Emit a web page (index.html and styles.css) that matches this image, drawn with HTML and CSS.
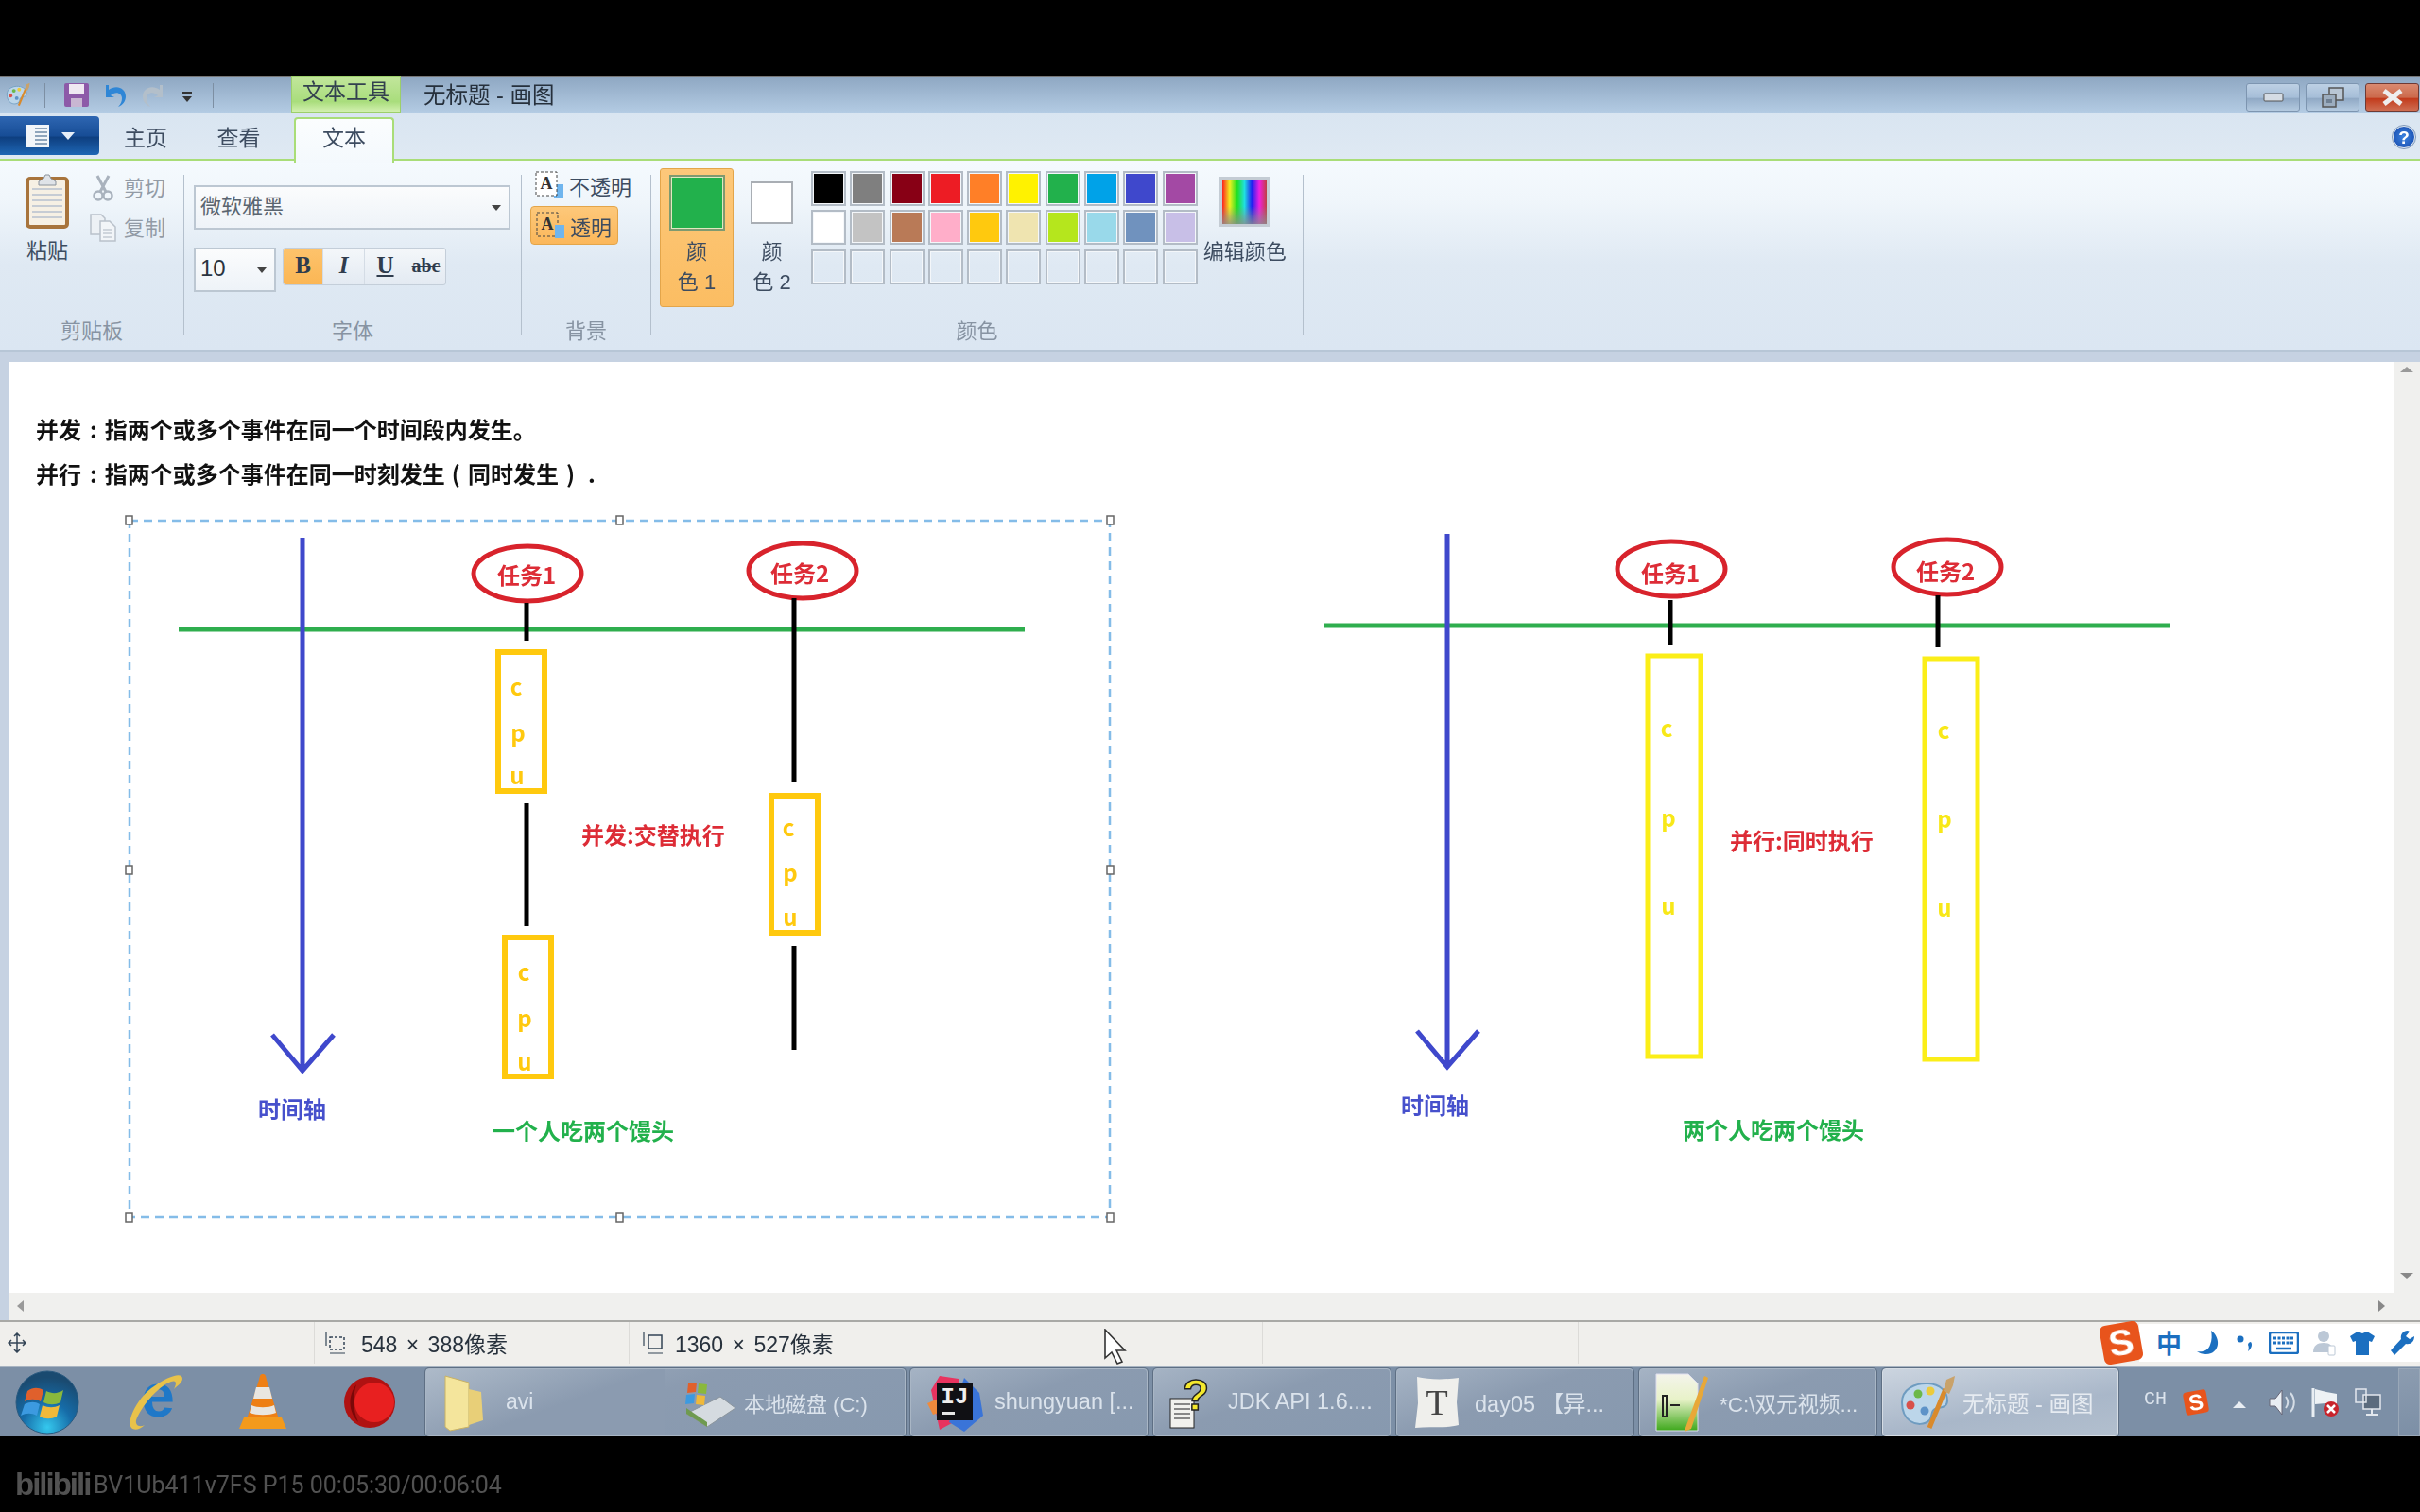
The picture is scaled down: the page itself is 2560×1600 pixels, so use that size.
FILE: index.html
```html
<!DOCTYPE html>
<html lang="zh-CN">
<head>
    <meta charset="UTF-8">
    <title>无标题 - 画图</title>
    <link rel="stylesheet" href="styles.css">
</head>
<body>
<svg class="defs" width="0" height="0">
    <symbol id="paint" viewBox="0 0 62 60">
        <path d="M4 30C4 16 18 9 32 10c12 1 20 8 20 18 0 8-8 7-13 9-5 2-2 7-6 12-5 5-14 5-20 1C7 46 4 38 4 30z" fill="#bcd6ea" stroke="#6f9cc0" stroke-width="2"/>
        <circle cx="13" cy="33" r="4.5" fill="#d8504a"/>
        <circle cx="21" cy="21" r="4.5" fill="#6cb84a"/>
        <circle cx="34" cy="18" r="4.5" fill="#eccb3c"/>
        <circle cx="28" cy="39" r="4.5" fill="#5e93c8"/>
        <path d="M33 57L50 16" stroke="#d98a2c" stroke-width="5" fill="none"/>
        <path d="M48 18l3-12 9-4-2 10-4 9z" fill="#c9a26a"/>
    </symbol>
</svg>

<div class="screen">
    <div class="video-bar"></div>

    <div class="window">
        <div class="titlebar">
            <svg class="qa-paint" width="28" height="26"><use href="#paint"/></svg>
            <div class="qa-sep"></div>
            <svg class="qa-save" width="28" height="27" viewBox="0 0 28 27">
                <rect x="1" y="1" width="26" height="25" rx="2" fill="#8d5aa8"/>
                <rect x="6" y="2" width="16" height="11" fill="#efe8f2"/>
                <rect x="8" y="17" width="12" height="9" fill="#c9b6d2"/>
            </svg>
            <svg class="qa-icon" width="26" height="28" viewBox="0 0 26 28">
                <path d="M3 4h3v5C14 3 24 7 24 16c0 5-3 9-8 11 3-3 4-6 4-9 0-6-7-8-12-3l4 2H3z" fill="#2f86d6"/>
            </svg>
            <svg class="qa-icon" width="26" height="28" viewBox="0 0 26 28">
                <path d="M23 4h-3v5C12 3 2 7 2 16c0 5 3 9 8 11-3-3-4-6-4-9 0-6 7-8 12-3l-4 2h9z" fill="#b3bfca"/>
            </svg>
            <svg class="qa-drop" width="12" height="14" viewBox="0 0 12 14">
                <rect x="1" y="1" width="10" height="2" fill="#333"/>
                <path d="M1 6h10l-5 6z" fill="#333"/>
            </svg>
            <div class="qa-sep qa-sep-last"></div>
            <div class="tool-tab">文本工具</div>
            <div class="doc-title">无标题 - 画图</div>
            <div class="win-buttons">
                <div class="win-btn">
                    <svg width="22" height="10"><rect x="1" y="1" width="20" height="8" rx="1" fill="#d5dce4" stroke="#555"/></svg>
                </div>
                <div class="win-btn">
                    <svg width="24" height="22" viewBox="0 0 24 22">
                        <rect x="8" y="1" width="15" height="13" fill="#b9c6d4" stroke="#555" stroke-width="1.5"/>
                        <rect x="1" y="8" width="14" height="13" fill="#9cadbf" stroke="#555" stroke-width="1.5"/>
                        <rect x="5" y="13" width="6" height="4" fill="#6f8093"/>
                    </svg>
                </div>
                <div class="win-btn win-close">
                    <svg width="22" height="18" viewBox="0 0 22 18"><path d="M2 2l18 14M20 2L2 16" stroke="#eee" stroke-width="5"/></svg>
                </div>
            </div>
        </div>

        <div class="tabs">
            <div class="app-menu">
                <svg width="30" height="26" viewBox="0 0 30 26">
                    <rect x="2" y="1" width="24" height="24" fill="#f2f5f9"/>
                    <path d="M11 5h13M11 9h13M11 13h13M11 17h13M11 21h13" stroke="#6f8aa8" stroke-width="1.5"/>
                </svg>
                <span class="app-arrow"></span>
            </div>
            <div class="tab tab-home">主页</div>
            <div class="tab tab-view">查看</div>
            <div class="tab tab-text">文本</div>
            <div class="help">?</div>
        </div>

        <div class="ribbon">
            <div class="group group-clip">
                <div class="group-body">
                    <div class="paste">
                        <svg width="46" height="58" viewBox="0 0 46 58">
                            <rect x="2" y="5" width="42" height="51" rx="3" fill="#f6f0e4" stroke="#a8743c" stroke-width="4"/>
                            <path d="M7 16h32M7 22h32M7 28h32M7 34h32M7 40h32M7 46h32" stroke="#c6ccd4" stroke-width="2"/>
                            <path d="M14 8l5-3 2-4h4l2 4 5 3v4H14z" fill="#dfe3e8" stroke="#8a929c"/>
                        </svg>
                        <div class="paste-label">粘贴</div>
                    </div>
                    <div class="clip-small">
                        <div class="clip-row">
                            <svg width="24" height="28" viewBox="0 0 24 28">
                                <path d="M6 1l9 17M18 1L9 18" stroke="#a9b2bd" stroke-width="3"/>
                                <circle cx="7" cy="22" r="4.5" fill="none" stroke="#a9b2bd" stroke-width="2.5"/>
                                <circle cx="17" cy="22" r="4.5" fill="none" stroke="#a9b2bd" stroke-width="2.5"/>
                            </svg>
                            <span class="clip-name">剪切</span>
                        </div>
                        <div class="clip-row">
                            <svg width="28" height="30" viewBox="0 0 28 30">
                                <path d="M1 1h11l4 4v17H1z" fill="#edf1f5" stroke="#b9c1ca" stroke-width="1.5"/>
                                <path d="M11 8h10l6 6v15H11z" fill="#f2f5f8" stroke="#b9c1ca" stroke-width="1.5"/>
                                <path d="M14 17h10M14 21h10M14 25h10" stroke="#c3cad2" stroke-width="1.5"/>
                            </svg>
                            <span class="clip-name">复制</span>
                        </div>
                    </div>
                </div>
                <div class="group-label">剪贴板</div>
            </div>
            <div class="group-sep"></div>

            <div class="group group-font">
                <div class="group-body font-body">
                    <div class="combo combo-font">
                        <span class="combo-text">微软雅黑</span>
                        <span class="combo-arrow"></span>
                    </div>
                    <div class="font-row">
                        <div class="combo combo-size">
                            <span class="combo-text combo-num">10</span>
                            <span class="combo-arrow"></span>
                        </div>
                        <div class="fmt-group">
                            <div class="fmt fmt-on fmt-b">B</div>
                            <div class="fmt fmt-i">I</div>
                            <div class="fmt fmt-u">U</div>
                            <div class="fmt fmt-s">abc</div>
                        </div>
                    </div>
                </div>
                <div class="group-label">字体</div>
            </div>
            <div class="group-sep"></div>

            <div class="group group-bg">
                <div class="group-body bg-body">
                    <div class="bg-row">
                        <svg width="30" height="30" viewBox="0 0 30 30">
                            <rect x="20" y="14" width="10" height="14" fill="#6fb5ee"/>
                            <rect x="1" y="1" width="22" height="25" fill="#fff" stroke="#444" stroke-dasharray="3 2"/>
                            <text class="icon-a" x="12" y="19" text-anchor="middle">A</text>
                        </svg>
                        <span>不透明</span>
                    </div>
                    <div class="bg-row bg-on">
                        <svg width="30" height="30" viewBox="0 0 30 30">
                            <rect x="1" y="1" width="22" height="25" fill="none" stroke="#444" stroke-dasharray="3 2"/>
                            <rect x="20" y="14" width="10" height="14" fill="#6fb5ee"/>
                            <text class="icon-a" x="12" y="19" text-anchor="middle">A</text>
                        </svg>
                        <span>透明</span>
                    </div>
                </div>
                <div class="group-label">背景</div>
            </div>
            <div class="group-sep"></div>

            <div class="group group-color">
                <div class="group-body color-body">
                    <div class="color-one">
                        <div class="swatch-big"></div>
                        <div class="color-name">颜<br>色 1</div>
                    </div>
                    <div class="color-two">
                        <div class="swatch-mid"></div>
                        <div class="color-name">颜<br>色 2</div>
                    </div>
                    <div class="palette">
                        <div class="cell c1"></div><div class="cell c2"></div><div class="cell c3"></div><div class="cell c4"></div><div class="cell c5"></div>
                        <div class="cell c6"></div><div class="cell c7"></div><div class="cell c8"></div><div class="cell c9"></div><div class="cell c10"></div>
                        <div class="cell c11"></div><div class="cell c12"></div><div class="cell c13"></div><div class="cell c14"></div><div class="cell c15"></div>
                        <div class="cell c16"></div><div class="cell c17"></div><div class="cell c18"></div><div class="cell c19"></div><div class="cell c20"></div>
                        <div class="cell"></div><div class="cell"></div><div class="cell"></div><div class="cell"></div><div class="cell"></div>
                        <div class="cell"></div><div class="cell"></div><div class="cell"></div><div class="cell"></div><div class="cell"></div>
                    </div>
                    <div class="edit-color">
                        <div class="rainbow"></div>
                        <div class="edit-label">编辑颜色</div>
                    </div>
                </div>
                <div class="group-label">颜色</div>
            </div>
            <div class="group-sep"></div>
        </div>
        <div class="ribbon-foot"></div>

        <div class="work">
            <div class="work-strip"></div>
            <div class="work-main">
                <svg class="canvas" width="2523" height="985" viewBox="9 383 2523 985">
                    <text class="t-head" x="38" y="464">并发<tspan dx="9">:</tspan><tspan dx="8">指两个或多个事件在同一个时间段内发生。</tspan></text>
                    <text class="t-head" x="38" y="511">并行<tspan dx="9">:</tspan><tspan dx="8">指两个或多个事件在同一时刻发生</tspan><tspan dx="7">(</tspan><tspan dx="8">同时发生</tspan><tspan dx="8">)</tspan><tspan dx="14">.</tspan></text>

                    <!-- 并发 -->
                    <rect class="sel" x="137" y="551" width="1037" height="737"/>
                    <rect class="handle" x="133" y="546" width="7" height="9"/>
                    <rect class="handle" x="652" y="546" width="7" height="9"/>
                    <rect class="handle" x="1171" y="546" width="7" height="9"/>
                    <rect class="handle" x="133" y="916" width="7" height="9"/>
                    <rect class="handle" x="1171" y="916" width="7" height="9"/>
                    <rect class="handle" x="133" y="1284" width="7" height="9"/>
                    <rect class="handle" x="652" y="1284" width="7" height="9"/>
                    <rect class="handle" x="1171" y="1284" width="7" height="9"/>

                    <line class="l-green" x1="189" y1="666" x2="1084" y2="666"/>
                    <path class="l-blue" d="M320 569V1133M288 1095L320 1133L353 1095"/>
                    <ellipse class="oval" cx="558" cy="607" rx="57" ry="29"/>
                    <ellipse class="oval" cx="849" cy="604" rx="57" ry="29"/>
                    <text class="t-red" x="557" y="618" text-anchor="middle">任务1</text>
                    <text class="t-red" x="846" y="616" text-anchor="middle">任务2</text>
                    <line class="l-black" x1="557" y1="638" x2="557" y2="678"/>
                    <line class="l-black" x1="557" y1="850" x2="557" y2="980"/>
                    <line class="l-black" x1="840" y1="633" x2="840" y2="828"/>
                    <line class="l-black" x1="840" y1="1001" x2="840" y2="1111"/>
                    <rect class="box-gold" x="527" y="690" width="49" height="147"/>
                    <rect class="box-gold" x="534" y="992" width="49" height="147"/>
                    <rect class="box-gold" x="816" y="842" width="49" height="145"/>
                    <text class="t-gold" x="546" y="736" text-anchor="middle">c</text>
                    <text class="t-gold" x="548" y="785" text-anchor="middle">p</text>
                    <text class="t-gold" x="547" y="830" text-anchor="middle">u</text>
                    <text class="t-gold" x="554" y="1038" text-anchor="middle">c</text>
                    <text class="t-gold" x="555" y="1087" text-anchor="middle">p</text>
                    <text class="t-gold" x="555" y="1133" text-anchor="middle">u</text>
                    <text class="t-gold" x="834" y="885" text-anchor="middle">c</text>
                    <text class="t-gold" x="836" y="933" text-anchor="middle">p</text>
                    <text class="t-gold" x="836" y="980" text-anchor="middle">u</text>
                    <text class="t-red" x="615" y="893">并发:交替执行</text>
                    <text class="t-blue" x="273" y="1183">时间轴</text>
                    <text class="t-green" x="521" y="1206">一个人吃两个馒头</text>

                    <!-- 并行 -->
                    <line class="l-green" x1="1401" y1="662" x2="2296" y2="662"/>
                    <path class="l-blue" d="M1531 565V1129M1499 1091L1531 1129L1564 1091"/>
                    <ellipse class="oval" cx="1768" cy="602" rx="57" ry="29"/>
                    <ellipse class="oval" cx="2060" cy="600" rx="57" ry="29"/>
                    <text class="t-red" x="1767" y="616" text-anchor="middle">任务1</text>
                    <text class="t-red" x="2058" y="614" text-anchor="middle">任务2</text>
                    <line class="l-black" x1="1767" y1="635" x2="1767" y2="683"/>
                    <line class="l-black" x1="2050" y1="630" x2="2050" y2="685"/>
                    <rect class="box-yellow" x="1743" y="694" width="56" height="424"/>
                    <rect class="box-yellow" x="2036" y="697" width="56" height="424"/>
                    <text class="t-yellow" x="1763" y="780" text-anchor="middle">c</text>
                    <text class="t-yellow" x="1765" y="875" text-anchor="middle">p</text>
                    <text class="t-yellow" x="1765" y="968" text-anchor="middle">u</text>
                    <text class="t-yellow" x="2056" y="782" text-anchor="middle">c</text>
                    <text class="t-yellow" x="2057" y="876" text-anchor="middle">p</text>
                    <text class="t-yellow" x="2057" y="970" text-anchor="middle">u</text>
                    <text class="t-red" x="1830" y="899">并行:同时执行</text>
                    <text class="t-blue" x="1482" y="1179">时间轴</text>
                    <text class="t-green" x="1780" y="1205">两个人吃两个馒头</text>
                </svg>
                <div class="hscroll">
                    <span class="arrow-left"></span>
                    <span class="arrow-right"></span>
                </div>
            </div>
            <div class="vscroll">
                <span class="arrow-up"></span>
                <span class="arrow-down"></span>
            </div>
        </div>

        <div class="statusbar">
            <div class="st-cell st-move">
                <svg width="20" height="22" viewBox="0 0 20 22">
                    <path d="M10 1v20M1 11h18M7 4l3-3 3 3M7 18l3 3 3-3M4 8l-3 3 3 3M16 8l3 3-3 3" fill="none" stroke="#345" stroke-width="1.5"/>
                </svg>
            </div>
            <div class="st-cell st-sel">
                <svg width="24" height="24" viewBox="0 0 24 24">
                    <rect x="6" y="6" width="15" height="13" fill="none" stroke="#345" stroke-width="1.5" stroke-dasharray="3 2"/>
                    <path d="M2 1v14M6 23h16" stroke="#345" stroke-width="1.2"/>
                </svg>
                <span>548 × 388像素</span>
            </div>
            <div class="st-cell st-img">
                <svg width="24" height="24" viewBox="0 0 24 24">
                    <rect x="8" y="4" width="14" height="14" fill="none" stroke="#345" stroke-width="1.5"/>
                    <path d="M3 1v14M8 23h15" stroke="#345" stroke-width="1.2"/>
                </svg>
                <span>1360 × 527像素</span>
            </div>
            <div class="st-cell st-blank"></div>
            <div class="ime">
                <svg class="ime-logo" width="54" height="54" viewBox="0 0 52 52">
                    <rect x="6" y="6" width="40" height="40" rx="6" fill="#e8541c" transform="rotate(-10 26 26)"/>
                    <text class="sogou-s" x="26" y="39" text-anchor="middle" transform="rotate(-10 26 26)">S</text>
                </svg>
                <div class="ime-bar">
                    <span class="ime-zh">中</span>
                    <svg width="26" height="28" viewBox="0 0 26 28"><path d="M15 1c9 6 10 20 0 24-5 2-11 1-15-2 7 1 12-1 14-7 2-5 2-10 1-15z" fill="#1b6fc0"/></svg>
                    <svg width="20" height="24" viewBox="0 0 20 24"><circle cx="5" cy="8" r="3.5" fill="#1b6fc0"/><path d="M16 11c2 2 1 7-3 10 1-3 1-5 0-7 0-2 2-3 3-3z" fill="#1b6fc0"/></svg>
                    <svg width="32" height="24" viewBox="0 0 32 24">
                        <rect x="1" y="1" width="30" height="22" rx="2" fill="none" stroke="#1b6fc0" stroke-width="2.5"/>
                        <path d="M5 7h22M5 12h22" stroke="#1b6fc0" stroke-width="3" stroke-dasharray="3 1.5"/>
                        <path d="M8 18h16" stroke="#1b6fc0" stroke-width="2.5"/>
                    </svg>
                    <svg width="24" height="28" viewBox="0 0 24 28">
                        <circle cx="11" cy="7" r="6" fill="#bcc8d6"/>
                        <path d="M0 24c0-7 4-10 11-10s10 3 10 10z" fill="#bcc8d6"/>
                        <rect x="16" y="17" width="7" height="10" rx="1" fill="#fff" stroke="#bcc8d6"/>
                    </svg>
                    <svg width="27" height="27" viewBox="0 0 27 27"><path d="M8 1l5 2 5-2 8 5-3 6-3-1v15H6V11l-3 1-3-6z" fill="#1b6fc0"/></svg>
                    <svg width="27" height="28" viewBox="0 0 27 28"><path d="M19 1c-5 0-8 4-7 9L1 22l4 5 12-12c5 1 9-2 9-8l-5 3-4-3 4-5z" fill="#1b6fc0"/></svg>
                </div>
            </div>
        </div>
    </div>

    <div class="taskbar">
        <div class="quick">
            <svg class="q-start" width="68" height="68" viewBox="0 0 68 68">
                <defs>
                    <radialGradient id="orb" cx="50%" cy="90%" r="80%">
                        <stop offset="0" stop-color="#35c8ee"/>
                        <stop offset=".5" stop-color="#166ca8"/>
                        <stop offset="1" stop-color="#1a4a70"/>
                    </radialGradient>
                </defs>
                <circle cx="34" cy="34" r="33" fill="url(#orb)" stroke="#2a5a80"/>
                <path d="M13 22c6-4 11-4 17-1l-3 12c-6-3-11-3-17 0z" fill="#e0602c"/>
                <path d="M33 22c6 3 12 3 18-1l-3 13c-6 3-12 3-18 0z" fill="#8ab83c"/>
                <path d="M10 36c6-3 11-3 16 0l-3 12c-6-3-11-3-17 0z" fill="#3c9ae0"/>
                <path d="M29 37c6 3 12 3 18 0l-3 12c-6 3-12 3-18 0z" fill="#f0b93a"/>
            </svg>
            <svg class="q-ie" width="60" height="62" viewBox="0 0 60 62">
                <text class="ie-e" x="32" y="46" text-anchor="middle">e</text>
                <path d="M4 58C-2 50 12 24 28 14 42 4 58 -2 58 6c0 4-6 8-9 11 3-6 3-10-3-8C32 14 14 36 9 50c-1 5 3 8 9 5-5 5-11 6-14 3z" fill="#e8c24a"/>
            </svg>
            <svg class="q-vlc" width="50" height="60" viewBox="0 0 50 60">
                <path d="M25 0c3 0 3 2 4 6l13 42H8L21 6c1-4 1-6 4-6z" fill="#ee7f14"/>
                <path d="M18 14h14l3 12H15z" fill="#e9e6e0"/>
                <path d="M5 46h40l5 12H0z" fill="#f39a1c"/>
                <path d="M13 33c6 3 18 3 24 0l2 8c-8 3-20 3-28 0z" fill="#e9e6e0"/>
            </svg>
            <svg class="q-red" width="56" height="58" viewBox="0 0 56 58">
                <circle cx="28" cy="29" r="27" fill="#b01212"/>
                <circle cx="33" cy="29" r="21" fill="#e82020"/>
                <path d="M14 10C5 22 5 38 16 50 10 36 10 22 14 10z" fill="#7a0808"/>
            </svg>
        </div>

        <div class="task task-wide">
            <div class="task-part task-hot">
                <svg width="42" height="60" viewBox="0 0 42 60">
                    <path d="M1 2l25 7v47L6 60 1 56z" fill="#f4e59c" stroke="#c9b264"/>
                    <path d="M26 16l13 3 2 30-15 5z" fill="#e8cf78"/>
                </svg>
                <span class="avi-name">avi</span>
            </div>
            <div class="task-part task-disk">
                <svg width="56" height="56" viewBox="0 0 56 56">
                    <path d="M4 40L40 22l16 12-30 20z" fill="#d5dbe0" stroke="#8a949c"/>
                    <path d="M4 40l22 14v-5L4 34z" fill="#6f9a50"/>
                    <path d="M6 8l9-1-1 10-9 1z" fill="#e0602c"/>
                    <path d="M17 8l9 1-1 10-9-1z" fill="#8ab83c"/>
                    <path d="M4 20l9-1-1 10-9 1z" fill="#3c9ae0"/>
                    <path d="M15 20l9 1-1 10-9-1z" fill="#f0b93a"/>
                </svg>
                <span>本地磁盘 (C:)</span>
            </div>
        </div>
        <div class="task">
            <svg width="60" height="62" viewBox="0 0 60 62">
                <path d="M5 18L14 3l20 3 6 40-26 14z" fill="#e8335f"/>
                <path d="M40 5l16 16 4 24-20 17-16-10z" fill="#3a74d8"/>
                <path d="M1 32l14-6 4 14-12 4z" fill="#ef8a3c"/>
                <rect x="11" y="11" width="38" height="39" fill="#101014"/>
                <text class="ij" x="30" y="32" text-anchor="middle">IJ</text>
                <rect x="16" y="41" width="14" height="3" fill="#e6e6e6"/>
            </svg>
            <span class="task-latin">shungyuan [...</span>
        </div>
        <div class="task task-jdk">
            <svg width="44" height="56" viewBox="0 0 44 56">
                <rect x="1" y="24" width="25" height="31" fill="#f2f2ee" stroke="#222"/>
                <path d="M5 30h17M5 35h17M5 40h17M5 45h17" stroke="#666" stroke-width="1.5"/>
                <text class="help-q" x="28" y="36" text-anchor="middle">?</text>
            </svg>
            <span class="task-latin">JDK API 1.6....</span>
        </div>
        <div class="task task-typora">
            <svg width="50" height="58" viewBox="0 0 50 58">
                <path d="M5 2c12 3 30 3 44 1l-2 26 2 24c-14 4-30 1-46 3l3-26z" fill="#efefec"/>
                <text class="t-typora" x="26" y="42" text-anchor="middle">T</text>
            </svg>
            <span class="task-latin">day05 【异...</span>
        </div>
        <div class="task">
            <svg width="56" height="62" viewBox="0 0 56 62">
                <defs>
                    <linearGradient id="npp" x1="0" y1="0" x2="0" y2="1">
                        <stop offset="0" stop-color="#f4f4ec"/>
                        <stop offset=".45" stop-color="#e8f2c8"/>
                        <stop offset="1" stop-color="#3ea81c"/>
                    </linearGradient>
                </defs>
                <path d="M1 1h34l10 10v50H1z" fill="url(#npp)" stroke="#dde"/>
                <path d="M8 24v22h4V24zM16 34h10" stroke="#222" stroke-width="2" fill="none"/>
                <path d="M32 58L52 3l4 2-18 54-7 3z" fill="#e8a838"/>
            </svg>
            <span class="task-latin task-npp">*C:\双元视频...</span>
        </div>
        <div class="task task-active">
            <svg width="62" height="62"><use href="#paint"/></svg>
            <span class="task-title">无标题 - 画图</span>
        </div>

        <div class="tray">
            <span class="tray-lang">CH</span>
            <svg width="32" height="32" viewBox="0 0 52 52">
                <rect x="6" y="6" width="40" height="40" rx="6" fill="#e8541c" transform="rotate(-10 26 26)"/>
                <text class="sogou-s" x="26" y="39" text-anchor="middle" transform="rotate(-10 26 26)">S</text>
            </svg>
            <span class="tray-up"></span>
            <svg width="30" height="30" viewBox="0 0 30 30">
                <path d="M1 11h6l7-9v26l-7-9H1z" fill="#e9eef3" stroke="#667"/>
                <path d="M18 9c3 4 3 8 0 12M23 5c5 6 5 14 0 20" fill="none" stroke="#d5dde6" stroke-width="2"/>
            </svg>
            <svg width="30" height="32" viewBox="0 0 30 32">
                <path d="M2 1v30" stroke="#e9eef3" stroke-width="3"/>
                <path d="M4 2l12 3 11 2v12l-12-2-11 1z" fill="#eef2f5"/>
                <circle cx="21" cy="23" r="8" fill="#c8242c"/>
                <path d="M17 19l8 8M25 19l-8 8" stroke="#fff" stroke-width="2.5"/>
            </svg>
            <svg width="28" height="30" viewBox="0 0 28 30">
                <rect x="9" y="7" width="18" height="15" fill="#5b6b7d" stroke="#e3e8ee" stroke-width="1.5"/>
                <rect x="1" y="1" width="11" height="14" fill="none" stroke="#e3e8ee" stroke-width="1.5"/>
                <path d="M18 22v5M12 28h13" stroke="#e3e8ee" stroke-width="2"/>
            </svg>
        </div>
        <div class="show-desktop"></div>
    </div>

    <div class="video-foot">
        <span class="bili">bilibili</span>
        <span class="video-info">BV1Ub411v7FS P15 00:05:30/00:06:04</span>
    </div>

    <svg class="cursor" width="26" height="38" viewBox="0 0 26 38">
        <path d="M2 1v30l7-6 6 12 5-2-6-12h9z" fill="#fff" stroke="#333" stroke-width="1.6"/>
    </svg>
</div>
</body>
</html>
```

FILE: styles.css
```css
* {
    box-sizing: border-box;
}
html, body {
    margin: 0;
    background: #000;
}
body {
    font-family: "Liberation Sans", "Noto Sans CJK SC", sans-serif;
    color: #3d4c60;
}
.defs {
    position: absolute;
}
.screen {
    position: relative;
    width: 2560px;
    height: 1600px;
    overflow: hidden;
    display: flex;
    flex-direction: column;
}
.video-bar {
    height: 80px;
    background: #000;
}
.window {
    height: 1366px;
    display: flex;
    flex-direction: column;
    filter: blur(.6px);
}

/* title bar */
.titlebar {
    height: 40px;
    display: flex;
    align-items: center;
    background: linear-gradient(#8fa8c3, #b4cce4);
    border-top: 2px solid #777;
    position: relative;
}
.qa-paint {
    margin-left: 5px;
    margin-top: -2px;
}
.qa-sep {
    width: 1px;
    height: 26px;
    margin-left: 14px;
    background: #7d8fa3;
}
.qa-save {
    margin-left: 19px;
    margin-top: -2px;
}
.qa-icon {
    margin-left: 14px;
    margin-top: -2px;
}
.qa-drop {
    margin-left: 17px;
    margin-top: 3px;
}
.qa-sep-last {
    margin-left: 21px;
}
.tool-tab {
    width: 116px;
    height: 40px;
    margin-left: 82px;
    margin-top: -2px;
    text-align: center;
    font-size: 23px;
    line-height: 32px;
    color: #33414f;
    background: linear-gradient(#c2e69c, #a9dd7c 70%, #d6f2b4);
    border: 1px solid #9ccf6a;
}
.doc-title {
    margin-left: 24px;
    margin-top: -5px;
    font-size: 23.5px;
    color: #26303c;
}
.win-buttons {
    margin-left: auto;
    display: flex;
    gap: 6px;
    margin-right: 1px;
    margin-top: 4px;
}
.win-btn {
    width: 57px;
    height: 30px;
    border: 1px solid #7d95b0;
    border-radius: 3px;
    background: linear-gradient(#bdd0e4, #a6bed8 50%, #90a9c5 55%, #b4cae0);
    display: flex;
    align-items: center;
    justify-content: center;
}
.win-close {
    background: linear-gradient(#d98a70, #cc6a4c 50%, #c23b1c 55%, #cf6e52);
    border-color: #6e3a34;
}

/* tabs */
.tabs {
    height: 50px;
    display: flex;
    background: linear-gradient(#d9e5f1, #dfe9f3);
    border-bottom: 2px solid #a9dd78;
    position: relative;
}
.app-menu {
    width: 105px;
    height: 41px;
    margin-top: 3px;
    display: flex;
    align-items: center;
    padding-left: 26px;
    gap: 9px;
    border-radius: 0 4px 4px 0;
    background: linear-gradient(#2e66b2, #174d96 50%, #0e3f80 55%, #1e66b4);
}
.app-arrow {
    width: 0;
    height: 0;
    border-left: 7px solid transparent;
    border-right: 7px solid transparent;
    border-top: 8px solid #e6eef8;
}
.tab {
    font-size: 23px;
    line-height: 52px;
    text-align: center;
}
.tab-home {
    width: 98px;
}
.tab-view {
    width: 99px;
}
.tab-text {
    width: 106px;
    margin-left: 9px;
    height: 48px;
    margin-top: 4px;
    line-height: 41px;
    background: linear-gradient(#fbfdfe, #f4f9fd);
    border: 2px solid #a9dd78;
    border-bottom: 0;
    border-radius: 4px 4px 0 0;
    position: relative;
    z-index: 1;
}
.help {
    margin-left: auto;
    margin-right: 5px;
    margin-top: 13px;
    width: 24px;
    height: 24px;
    border-radius: 50%;
    background: radial-gradient(#3b83e0, #1546a8);
    border: 1px solid #dfe8f2;
    outline: 1px solid #8098b8;
    color: #fff;
    font-size: 19px;
    font-weight: bold;
    line-height: 23px;
    text-align: center;
}

/* ribbon */
.ribbon {
    height: 202px;
    display: flex;
    background: linear-gradient(#f5fafe, #f0f6fb 20%, #dfe9f3 55%, #dbe6f2);
    border-bottom: 2px solid #b7c6d6;
}
.ribbon-foot {
    height: 11px;
    background: #c6d2e2;
}
.group {
    display: flex;
    flex-direction: column;
}
.group-body {
    flex: 1;
}
.group-label {
    height: 33px;
    margin-bottom: 1px;
    text-align: center;
    font-size: 22px;
    line-height: 30px;
    color: #8793a2;
}
.group-sep {
    width: 1px;
    height: 170px;
    margin-top: 15px;
    background: #b4c0cd;
}
.group-clip {
    width: 194px;
}
.group-font {
    width: 356px;
}
.group-bg {
    width: 136px;
}
.group-color {
    width: 689px;
}

.group-clip .group-body {
    display: flex;
}
.paste {
    margin-left: 27px;
    width: 46px;
    padding-top: 14px;
}
.paste svg {
    display: block;
}
.paste-label {
    margin: 9px -8px 0;
    text-align: center;
    font-size: 22px;
    line-height: 30px;
}
.clip-small {
    margin-left: 22px;
    padding-top: 14px;
    display: flex;
    flex-direction: column;
    gap: 12px;
    color: #929ba6;
    font-size: 22px;
}
.clip-row {
    display: flex;
    align-items: center;
    height: 30px;
    gap: 8px;
}
.clip-row svg {
    width: 28px;
}
.clip-name {
    margin-top: -5px;
}

.font-body {
    padding: 26px 0 0 10px;
}
.combo {
    display: flex;
    align-items: center;
    justify-content: space-between;
    height: 47px;
    background: linear-gradient(#fbfcfd, #eef3f8);
    border: 2px solid #bcc7d2;
    padding: 0 8px 0 5px;
}
.combo-font {
    width: 335px;
}
.combo-size {
    width: 87px;
}
.combo-text {
    font-size: 22px;
    color: #5a6570;
}
.combo-font .combo-text {
    margin-top: -8px;
}
.combo-num {
    color: #2a3340;
    font-size: 24px;
    margin-top: -3px;
}
.combo-arrow {
    width: 0;
    height: 0;
    border-left: 5px solid transparent;
    border-right: 5px solid transparent;
    border-top: 6px solid #444;
}
.font-row {
    display: flex;
    margin-top: 19px;
}
.fmt-group {
    margin-left: 7px;
    display: flex;
    height: 40px;
    border: 1px solid #c4ced9;
    border-radius: 3px;
    background: linear-gradient(#f4f7fa, #e3eaf2);
}
.fmt {
    width: 44px;
    text-align: center;
    font-family: "Liberation Serif", serif;
    font-weight: bold;
    font-size: 25px;
    line-height: 36px;
    color: #2f3c4d;
    border-right: 1px solid #d4dce5;
}
.fmt:last-child {
    border-right: 0;
    width: 41px;
}
.fmt-on {
    width: 42px;
    background: linear-gradient(#fdc36c, #fbb654);
    border-radius: 3px 0 0 3px;
}
.fmt-i {
    font-style: italic;
}
.fmt-u {
    text-decoration: underline;
}
.fmt-s {
    font-size: 20px;
    text-decoration: line-through;
}

.bg-body {
    padding: 9px 0 0 9px;
}
.bg-row {
    display: flex;
    align-items: center;
    gap: 6px;
    height: 34px;
    padding-left: 5px;
    font-size: 22px;
    white-space: nowrap;
}
.bg-on {
    width: 93px;
    height: 41px;
    margin-top: 5px;
    background: linear-gradient(#fdc87a, #fbb75a);
    border: 1px solid #e3a54a;
    border-radius: 4px;
}

.color-body {
    display: flex;
    padding-left: 9px;
    align-items: flex-start;
}
.color-one {
    width: 78px;
    height: 147px;
    margin-top: 8px;
    padding-top: 6px;
    border: 1px solid #e3a54a;
    border-radius: 3px;
    background: linear-gradient(#fdc87a, #fbbd62);
}
.swatch-big {
    width: 59px;
    height: 59px;
    margin: 0 auto;
    background: #22b14c;
    border: 2px solid #7f9a70;
    outline: 1px solid #e0e8c0;
    outline-offset: -3px;
}
.color-name {
    margin-top: 7px;
    text-align: center;
    font-size: 22px;
    line-height: 32px;
    white-space: nowrap;
}
.color-two {
    width: 45px;
    margin: 22px 0 0 18px;
}
.swatch-mid {
    width: 45px;
    height: 45px;
    background: #fff;
    border: 2px solid #a9aeb4;
}
.color-two .color-name {
    margin-top: 14px;
}
.palette {
    margin: 11px 0 0 19px;
    display: grid;
    grid-template-columns: repeat(10, 37px);
    gap: 4.3px;
}
.cell {
    height: 37px;
    border: 2px solid #b3bcc6;
    outline: 1px solid #f4f7fa;
    outline-offset: -3px;
}
.c1 { background: #000; }
.c2 { background: #7f7f7f; }
.c3 { background: #880015; }
.c4 { background: #ed1c24; }
.c5 { background: #ff7f27; }
.c6 { background: #fff200; }
.c7 { background: #22b14c; }
.c8 { background: #00a2e8; }
.c9 { background: #3f48cc; }
.c10 { background: #a349a4; }
.c11 { background: #fff; }
.c12 { background: #c3c3c3; }
.c13 { background: #b97a57; }
.c14 { background: #ffaec9; }
.c15 { background: #ffc90e; }
.c16 { background: #efe4b0; }
.c17 { background: #b5e61d; }
.c18 { background: #99d9ea; }
.c19 { background: #7092be; }
.c20 { background: #c8bfe7; }
.edit-color {
    width: 92px;
    margin-left: 4px;
    padding-top: 17px;
}
.rainbow {
    width: 53px;
    height: 53px;
    margin: 0 auto;
    border: 3px solid #c4ccd4;
    background:
        linear-gradient(rgba(255,255,255,0) 60%, rgba(140,140,140,.8)),
        linear-gradient(90deg, #ff2020, #f0f020, #20e020, #20e0e0, #2020f0, #f020e0, #c04040);
}
.edit-label {
    margin-top: 12px;
    text-align: center;
    font-size: 22px;
    line-height: 30px;
}

/* drawing area */
.work {
    height: 1015px;
    display: flex;
}
.work-strip {
    width: 9px;
    background: #c6d2e2;
}
.work-main {
    width: 2523px;
    display: flex;
    flex-direction: column;
}
.canvas {
    display: block;
    background: #fff;
}
.hscroll {
    flex: 1;
    display: flex;
    align-items: center;
    justify-content: space-between;
    padding: 0 9px;
    background: #f0f0ee;
}
.vscroll {
    width: 28px;
    display: flex;
    flex-direction: column;
    align-items: center;
    justify-content: space-between;
    padding: 5px 0 44px;
    background: #f0f0ee;
}
.arrow-left, .arrow-right {
    width: 0;
    height: 0;
    border-top: 6px solid transparent;
    border-bottom: 6px solid transparent;
}
.arrow-left {
    border-right: 7px solid #999;
}
.arrow-right {
    border-left: 7px solid #888;
}
.arrow-up, .arrow-down {
    width: 0;
    height: 0;
    border-left: 7px solid transparent;
    border-right: 7px solid transparent;
}
.arrow-up {
    border-bottom: 6px solid #999;
}
.arrow-down {
    border-top: 6px solid #888;
}

.t-head, .t-red, .t-blue, .t-green, .t-gold, .t-yellow {
    font-family: "Noto Sans CJK SC", sans-serif;
    font-weight: bold;
    font-size: 24px;
}
.t-head {
    fill: #111;
}
.t-red {
    fill: #dd2c36;
}
.t-blue {
    fill: #4650cc;
}
.t-green {
    fill: #22b14c;
}
.t-gold {
    fill: #ffc90e;
}
.t-yellow {
    fill: #f8e818;
}
.sel {
    fill: none;
    stroke: #84bce8;
    stroke-width: 2.5;
    stroke-dasharray: 9 6;
}
.handle {
    fill: #fff;
    stroke: #666;
    stroke-width: 1.5;
}
.l-green {
    stroke: #2fae4e;
    stroke-width: 5;
}
.l-blue {
    fill: none;
    stroke: #3f48cc;
    stroke-width: 5;
}
.l-black {
    stroke: #000;
    stroke-width: 5;
}
.oval {
    fill: none;
    stroke: #d8232c;
    stroke-width: 5;
}
.box-gold {
    fill: none;
    stroke: #ffc90e;
    stroke-width: 6;
}
.box-yellow {
    fill: none;
    stroke: #fbee18;
    stroke-width: 5;
}

/* status bar */
.statusbar {
    height: 49px;
    display: flex;
    background: #f0efec;
    border-top: 2px solid #a9a9a6;
    border-bottom: 1px solid #3c4450;
    position: relative;
    font-size: 23px;
    word-spacing: 3px;
    color: #27313c;
}
.st-cell {
    height: 44px;
    display: flex;
    align-items: center;
    border-right: 1px solid #dcdbd8;
    white-space: nowrap;
}
.st-move {
    width: 333px;
    padding-left: 8px;
}
.st-sel {
    width: 333px;
    padding-left: 10px;
    gap: 15px;
}
.st-img {
    width: 670px;
    padding-left: 12px;
    gap: 12px;
}
.st-blank {
    width: 0;
    flex: 0 0 334px;
}
.ime {
    position: absolute;
    left: 2217px;
    top: -4px;
    display: flex;
    align-items: center;
    width: 343px;
    height: 52px;
}
.ime-logo {
    position: relative;
    z-index: 1;
}
.ime-bar {
    flex: 1;
    height: 40px;
    margin-left: -8px;
    padding-left: 18px;
    display: flex;
    align-items: center;
    gap: 15px;
    background: #fff;
}
.ime-zh {
    width: 28px;
    color: #1b6fc0;
    font-family: "Noto Sans CJK SC", sans-serif;
    font-weight: bold;
    font-size: 27px;
    line-height: 30px;
}
.sogou-s {
    font-family: "Liberation Sans", sans-serif;
    font-weight: bold;
    font-size: 38px;
    fill: #fff;
}

/* taskbar */
.taskbar {
    height: 74px;
    display: flex;
    align-items: center;
    background: #7c8fa6;
    border-top: 1px solid #a8b4c2;
    filter: blur(.6px);
    color: #dbe3ec;
    font-size: 22px;
}
.taskbar svg {
    overflow: visible;
}
.quick {
    width: 450px;
    display: flex;
    align-items: center;
    flex-shrink: 0;
}
.q-start {
    margin-left: 16px;
}
.q-ie {
    margin-left: 51px;
}
.q-vlc {
    margin-left: 58px;
}
.q-red {
    margin-left: 60px;
}
.task {
    width: 251px;
    height: 72px;
    margin-right: 6px;
    padding-left: 16px;
    display: flex;
    align-items: center;
    gap: 12px;
    white-space: nowrap;
    border: 1px solid #a9b6c5;
    border-radius: 4px;
    box-shadow: 0 0 0 1px #5e6f84;
    background: linear-gradient(160deg, #a5b3c4, #8b9bb0 45%, #8799af);
}
.task-wide {
    width: 508px;
    margin-right: 5px;
    padding-left: 0;
    gap: 0;
    align-items: stretch;
}
.task-part {
    display: flex;
    align-items: center;
}
.task-hot {
    width: 253px;
    padding-left: 19px;
    gap: 23px;
    background: linear-gradient(160deg, #adbac9, #8b9bb0 55%);
}
.task-disk {
    padding-left: 18px;
    gap: 9px;
}
.avi-name {
    font-size: 23px;
}
.task-latin {
    font-size: 23.5px;
}
.task-jdk {
    gap: 18px;
}
.task-typora {
    gap: 16px;
}
.task-npp {
    font-size: 22.5px;
}
.task-active {
    width: 250px;
    margin-right: 0;
    gap: 6px;
    color: #e6ebf1;
    border-color: #d5dce4;
    background: linear-gradient(170deg, #cbd4df, #a9b7c9 60%, #b2bfce);
}
.task-title {
    font-size: 23.5px;
}
.tray {
    margin-left: 27px;
    display: flex;
    align-items: center;
    gap: 15.5px;
}
.tray-lang {
    font-family: "Liberation Mono", monospace;
    font-size: 20px;
    width: 23px;
    margin-top: -6px;
}
.tray-up {
    width: 0;
    height: 0;
    margin: 6px 8px 0;
    border-left: 7px solid transparent;
    border-right: 7px solid transparent;
    border-bottom: 7px solid #e9eef3;
}
.show-desktop {
    margin-left: auto;
    width: 23px;
    height: 72px;
    background: linear-gradient(170deg, #8c9cb0, #7c8fa6);
    border: 1px solid #9aa8b8;
}
.ij {
    font-family: "Liberation Mono", monospace;
    font-weight: bold;
    font-size: 24px;
    fill: #eee;
}
.ie-e {
    font-family: "Liberation Sans", sans-serif;
    font-weight: bold;
    font-size: 64px;
    fill: #1f78c8;
}
.help-q {
    font-family: "Liberation Sans", sans-serif;
    font-weight: bold;
    font-size: 46px;
    fill: #f4e82c;
    stroke: #222;
    stroke-width: 1.5;
}
.t-typora {
    font-family: "Liberation Serif", serif;
    font-size: 38px;
    fill: #444;
}
.icon-a {
    font-family: "Liberation Serif", serif;
    font-weight: bold;
    font-size: 18px;
    fill: #333;
}

/* video footer */
.video-foot {
    flex: 1;
    display: flex;
    align-items: center;
    padding: 22px 0 0 16px;
    background: #000;
    color: #525252;
    filter: blur(.6px);
}
.bili {
    width: 83px;
    font-weight: bold;
    font-size: 33px;
    letter-spacing: -2px;
}
.video-info {
    font-family: Roboto, sans-serif;
    font-size: 25px;
}
.cursor {
    position: absolute;
    left: 1167px;
    top: 1406px;
}
```
